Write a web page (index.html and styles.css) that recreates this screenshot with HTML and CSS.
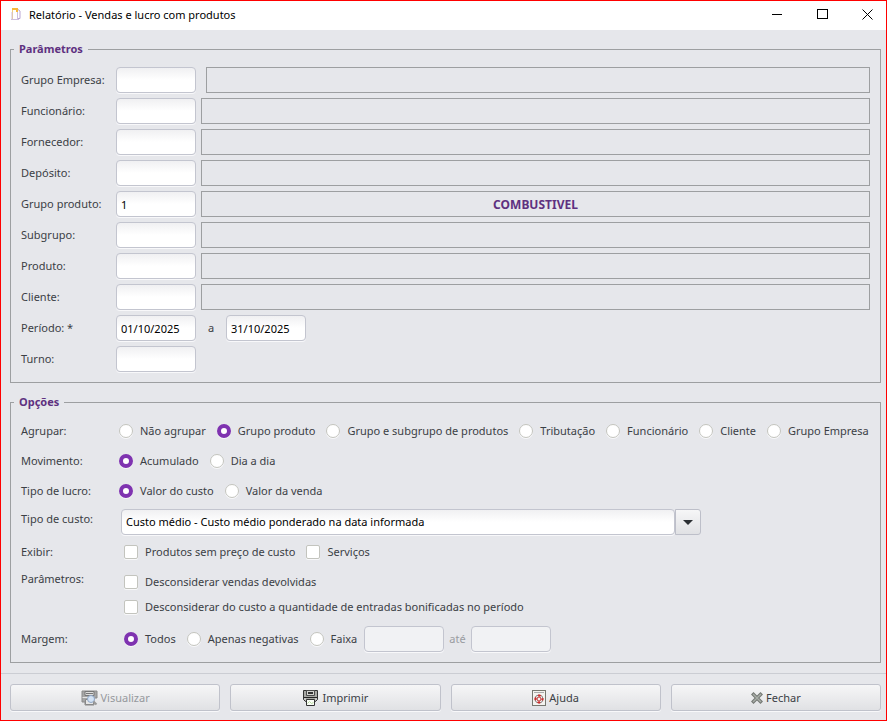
FILE: index.html
```html
<!DOCTYPE html>
<html lang="pt-BR">
<head>
    <meta charset="utf-8">
    <title>Relatório - Vendas e lucro com produtos</title>
    <link rel="stylesheet" href="styles.css">
</head>
<body>
    <div class="window">
        <header class="titlebar">
            <svg class="app-icon" width="10" height="13" viewBox="0 0 10 13">
                <path d="M1.5 1v11" stroke="#f2cf7a" stroke-width="1"/>
                <path d="M1 4v8M6.500 4v8M0 11.500h8" stroke="#cdbfe0" fill="none"/>
                <path d="M1 1h5v3" stroke="#f6b83c" stroke-width="2" fill="none"/>
                <path d="M7 1.500l2 1.500v7.500h-2" stroke="#b9a5d3" fill="none"/>
            </svg>
            <h1>Relatório - Vendas e lucro com produtos</h1>
            <div class="window-controls">
                <button type="button" aria-label="Minimizar"><svg width="11" height="11"><path d="M0 5.500h10" stroke="#000"/></svg></button>
                <button type="button" aria-label="Maximizar"><svg width="11" height="11"><rect x=".5" y=".5" width="10" height="9" fill="none" stroke="#000"/></svg></button>
                <button type="button" aria-label="Fechar janela"><svg width="11" height="11"><path d="M.5 .5l10 10M10.500 .5l-10 10" stroke="#000"/></svg></button>
            </div>
        </header>

        <form>
            <main>
                <fieldset class="params">
                    <legend>Parâmetros</legend>
                    <div class="row">
                        <label class="caption" for="grupoEmpresa">Grupo Empresa:</label>
                        <input class="field" type="text" id="grupoEmpresa">
                        <output class="display wide-gap" for="grupoEmpresa"></output>
                    </div>
                    <div class="row">
                        <label class="caption" for="funcionario">Funcionário:</label>
                        <input class="field" type="text" id="funcionario">
                        <output class="display" for="funcionario"></output>
                    </div>
                    <div class="row">
                        <label class="caption" for="fornecedor">Fornecedor:</label>
                        <input class="field" type="text" id="fornecedor">
                        <output class="display" for="fornecedor"></output>
                    </div>
                    <div class="row">
                        <label class="caption" for="deposito">Depósito:</label>
                        <input class="field" type="text" id="deposito">
                        <output class="display" for="deposito"></output>
                    </div>
                    <div class="row">
                        <label class="caption" for="grupoProduto">Grupo produto:</label>
                        <input class="field" type="text" id="grupoProduto" value="1">
                        <output class="display" for="grupoProduto">COMBUSTIVEL</output>
                    </div>
                    <div class="row">
                        <label class="caption" for="subgrupo">Subgrupo:</label>
                        <input class="field" type="text" id="subgrupo">
                        <output class="display" for="subgrupo"></output>
                    </div>
                    <div class="row">
                        <label class="caption" for="produto">Produto:</label>
                        <input class="field" type="text" id="produto">
                        <output class="display" for="produto"></output>
                    </div>
                    <div class="row">
                        <label class="caption" for="cliente">Cliente:</label>
                        <input class="field" type="text" id="cliente">
                        <output class="display" for="cliente"></output>
                    </div>
                    <div class="row">
                        <label class="caption" for="periodoInicio">Período: *</label>
                        <input class="field" type="text" id="periodoInicio" value="01/10/2025">
                        <label class="until" for="periodoFim">a</label>
                        <input class="field" type="text" id="periodoFim" value="31/10/2025">
                    </div>
                    <div class="row">
                        <label class="caption" for="turno">Turno:</label>
                        <input class="field" type="text" id="turno">
                    </div>
                </fieldset>

                <fieldset class="options">
                    <legend>Opções</legend>
                    <div class="row" role="radiogroup" aria-labelledby="agrupar">
                        <span class="caption" id="agrupar">Agrupar:</span>
                        <div class="choices">
                            <label><input type="radio" name="agrupar">Não agrupar</label>
                            <label><input type="radio" name="agrupar" checked>Grupo produto</label>
                            <label><input type="radio" name="agrupar">Grupo e subgrupo de produtos</label>
                            <label><input type="radio" name="agrupar">Tributação</label>
                            <label><input type="radio" name="agrupar">Funcionário</label>
                            <label><input type="radio" name="agrupar">Cliente</label>
                            <label><input type="radio" name="agrupar">Grupo Empresa</label>
                        </div>
                    </div>
                    <div class="row" role="radiogroup" aria-labelledby="movimento">
                        <span class="caption" id="movimento">Movimento:</span>
                        <div class="choices">
                            <label><input type="radio" name="movimento" checked>Acumulado</label>
                            <label><input type="radio" name="movimento">Dia a dia</label>
                        </div>
                    </div>
                    <div class="row" role="radiogroup" aria-labelledby="tipoLucro">
                        <span class="caption" id="tipoLucro">Tipo de lucro:</span>
                        <div class="choices">
                            <label><input type="radio" name="tipoLucro" checked>Valor do custo</label>
                            <label><input type="radio" name="tipoLucro">Valor da venda</label>
                        </div>
                    </div>
                    <div class="row top">
                        <label class="caption" for="tipoCusto">Tipo de custo:</label>
                        <div class="combo">
                            <select id="tipoCusto">
                                <option>Custo médio - Custo médio ponderado na data informada</option>
                            </select>
                            <span class="combo-arrow"><svg width="10" height="5"><path d="M0 0h10l-5 5z" fill="#2b2f33"/></svg></span>
                        </div>
                    </div>
                    <div class="row" role="group" aria-labelledby="exibir">
                        <span class="caption" id="exibir">Exibir:</span>
                        <div class="choices indent">
                            <label><input type="checkbox">Produtos sem preço de custo</label>
                            <label><input type="checkbox">Serviços</label>
                        </div>
                    </div>
                    <div class="row top" role="group" aria-labelledby="parametros">
                        <span class="caption" id="parametros">Parâmetros:</span>
                        <div class="choices indent stacked">
                            <label><input type="checkbox">Desconsiderar vendas devolvidas</label>
                            <label><input type="checkbox">Desconsiderar do custo a quantidade de entradas bonificadas no período</label>
                        </div>
                    </div>
                    <div class="row" role="group" aria-labelledby="margem">
                        <span class="caption" id="margem">Margem:</span>
                        <div class="choices indent">
                            <label><input type="radio" name="margem" checked>Todos</label>
                            <label><input type="radio" name="margem">Apenas negativas</label>
                            <label><input type="radio" name="margem">Faixa</label>
                        </div>
                        <div class="range">
                            <input class="field" type="text" aria-label="Margem de" disabled>
                            <label for="margemAte">até</label>
                            <input class="field" type="text" id="margemAte" disabled>
                        </div>
                    </div>
                </fieldset>
            </main>

            <footer>
                <button type="button" disabled>
                    <svg width="17" height="16" viewBox="0 0 17 16">
                        <path d="M1 1h15v7h-3v7h-9v-3h-3z" fill="#a6a6a6" stroke="#8a8a8a"/>
                        <path d="M4 1.500h9v4h-9z" fill="#dcdcdc" stroke="#777"/>
                        <path d="M5 3.500h7" stroke="#777"/>
                        <path d="M1.500 7.500h6" stroke="#e5e5e5"/>
                        <path d="M4.500 9.500h8v5h-8z" fill="#e6e6e6" stroke="#888"/>
                        <circle cx="10" cy="9" r="3.500" fill="#d3e2f4" stroke="#8fa6c6"/>
                        <path d="M12.500 11.500l3 3" stroke="#999" stroke-width="2"/>
                    </svg>
                    Visualizar
                </button>
                <button type="button">
                    <svg width="17" height="16" viewBox="0 0 17 16">
                        <path d="M1.500 .5h14v9l-2 2h-10l-2-2z" fill="#a9aaa6" stroke="#333"/>
                        <path d="M4.500 .5h8v5h-8z" fill="#d4d4d0" stroke="#4c4c4c"/>
                        <path d="M6 3h5" stroke="#333" stroke-width="2"/>
                        <path d="M2 7.500h13" stroke="#242424"/>
                        <path d="M2 9h2M13 9h2" stroke="#e6e6e6"/>
                        <path d="M4.500 9.500h8v6h-8z" fill="#fafdf6" stroke="#333"/>
                        <path d="M5.500 13.500l2-2 2 2 2-1" stroke="#b9dc9f" fill="none"/>
                    </svg>
                    Imprimir
                </button>
                <button type="button">
                    <svg width="14" height="16" viewBox="0 0 14 16">
                        <rect x=".5" y=".5" width="13" height="15" fill="#f3f3ef" stroke="#77776f"/>
                        <path d="M2 2.500h10" stroke="#aaa"/>
                        <circle cx="7" cy="9" r="4" fill="none" stroke="#8e8585"/>
                        <circle cx="7" cy="9" r="3.500" fill="none" stroke="#d02a2a" stroke-width="2" stroke-dasharray="2.750" stroke-dashoffset="1.400"/>
                        <circle cx="7" cy="9" r="2" fill="#f3f3ef" stroke="#b33"/>
                    </svg>
                    Ajuda
                </button>
                <button type="button">
                    <svg width="12" height="12" viewBox="0 0 12 12">
                        <path d="M2.500 2.500l7 7M9.500 2.500l-7 7" stroke="#727672" stroke-width="3.500" stroke-linecap="square"/>
                        <path d="M2 2l8 8M10 2l-8 8" stroke="#a9aea8" stroke-width="1.500"/>
                    </svg>
                    Fechar
                </button>
            </footer>
        </form>
    </div>
</body>
</html>
```

FILE: styles.css
```css
* {
    box-sizing: border-box;
}

body {
    margin: 0;
    font-family: "Noto Sans", "Open Sans", sans-serif;
    font-size: 11px;
    line-height: 18px;
    color: #3b4045;
}

button,
input,
select {
    font: inherit;
    color: inherit;
}

.window {
    min-height: 100vh;
    border: 1px solid #ff0000;
    background: #e6e7eb;
}

/* title bar */
.titlebar {
    display: flex;
    align-items: center;
    height: 29px;
    padding: 0 4px 2px 10px;
    background: #fff;
}

.titlebar h1 {
    flex: 1;
    margin: 0 0 0 8px;
    font-size: 11px;
    font-weight: normal;
    color: #000;
}

.window-controls {
    display: flex;
    gap: 15px;
}

.window-controls button {
    display: flex;
    align-items: center;
    justify-content: center;
    width: 30px;
    height: 27px;
    padding: 0;
    border: 0;
    background: none;
}

/* groups */
main {
    display: flex;
    flex-direction: column;
    gap: 10px;
    padding: 10px 5px 10px 9px;
}

fieldset {
    display: block;
    min-width: 0;
    margin: 0;
    border: 1px solid #9d9fa1;
}

legend {
    margin-left: -7px;
    padding: 0 5px;
    font-weight: bold;
    color: #5e3180;
}

.params {
    padding: 9px 10px 10px;
}

.options {
    padding: 8px 10px 10px;
}

.row {
    display: flex;
    align-items: center;
    white-space: nowrap;
}

.params .row + .row {
    margin-top: 5px;
}

.options .row + .row {
    margin-top: 7px;
}

.options .top {
    align-items: flex-start;
}

.caption {
    flex: none;
    width: 95px;
    line-height: 20px;
}

.field {
    width: 80px;
    height: 26px;
    padding: 0 4px;
    border: 1px solid #c3c5cf;
    border-radius: 4px;
    background: linear-gradient(#f0f0f2, #fff 50%);
    box-shadow: 0 1px 0 #f8f8fa;
    color: #000;
}

.field:disabled {
    background: #f1f2f4;
}

.display {
    flex: 1;
    height: 26px;
    margin-left: 5px;
    border: 1px solid #9d9fa1;
    line-height: 26px;
    text-align: center;
    font-size: 12px;
    font-weight: bold;
    color: #5e3180;
}

.wide-gap {
    margin-left: 10px;
}

.until {
    width: 30px;
    text-align: center;
}

/* radios and tick boxes */
.choices {
    display: flex;
    gap: 11px;
    padding-left: 3px;
}

.choices.indent {
    padding-left: 8px;
}

.choices label {
    display: flex;
    align-items: center;
    gap: 7px;
    height: 23px;
}

.choices.indent label {
    height: 18px;
}

.choices.stacked {
    flex-direction: column;
    gap: 0;
}

.choices.stacked label {
    height: 25px;
}

.choices input {
    appearance: none;
    flex: none;
    width: 14px;
    height: 14px;
    margin: 0;
    border: 1px solid #c3c4be;
    border-radius: 2px;
    background: #fff;
    box-shadow: 0 1px 0 #f8f8fa;
}

.choices input[type="radio"] {
    border-radius: 50%;
}

.choices input[type="radio"]:checked {
    border: 4px solid #7f33b0;
}

.range {
    display: flex;
    align-items: center;
    gap: 5px;
    margin-left: 7px;
    color: #999ca1;
}

/* drop-down */
.combo {
    position: relative;
    width: 580px;
    margin-left: 5px;
}

.combo select {
    display: block;
    appearance: none;
    width: 554px;
    height: 26px;
    padding: 0 4px;
    border: 1px solid #c3c5cf;
    border-radius: 4px;
    background: linear-gradient(#f0f0f2, #fff 50%);
    box-shadow: 0 1px 0 #f8f8fa;
    color: #000;
}

.combo-arrow {
    position: absolute;
    top: 0;
    right: 0;
    display: flex;
    align-items: center;
    justify-content: center;
    width: 26px;
    height: 26px;
    border: 1px solid #bdbfc9;
    border-radius: 0 3px 3px 0;
    background: linear-gradient(#f6f6f7, #e0e1e4);
    pointer-events: none;
}

/* bottom buttons */
footer {
    display: flex;
    gap: 10px;
    padding: 10px 5px 9px 9px;
    border-top: 1px solid #cbcdd3;
}

footer button {
    flex: 1;
    display: flex;
    align-items: center;
    justify-content: center;
    gap: 3px;
    height: 27px;
    border: 1px solid #c0c2cb;
    border-radius: 3px;
    background: linear-gradient(#f6f6f7, #e0e1e4);
    box-shadow: 0 1px 0 #f8f8fa;
}

footer button:disabled {
    color: #96999d;
}
```
